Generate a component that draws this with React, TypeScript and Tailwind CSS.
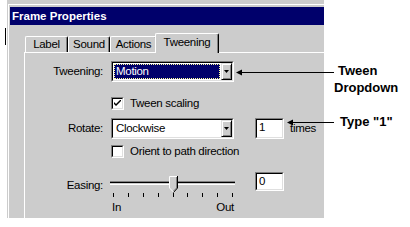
import type { ReactNode } from 'react'

function Sunken({ className = '', children }: { className?: string; children?: ReactNode }) {
    return (
        <div className={`border border-t-[#808080] border-l-[#808080] border-r-white border-b-white ${className}`}>
            <div className="h-full border border-t-black border-l-black border-r-[#dfdfdf] border-b-[#dfdfdf] bg-white">
                {children}
            </div>
        </div>
    )
}

function Dropdown({ value, selected = false }: { value: string; selected?: boolean }) {
    return (
        <Sunken className="h-[21px] w-[123px]">
            <div className="flex h-full">
                <div className="flex-1 p-[1px]">
                    {selected ? (
                        <div className="h-full border border-dotted border-[#ffff99] bg-[#00006b] pl-[1px] leading-[13px] text-white">
                            {value}
                        </div>
                    ) : (
                        <div className="h-full pl-[2px] leading-[15px]">{value}</div>
                    )}
                </div>
                <div className="flex h-full w-[11px] items-center justify-center border border-t-[#dfdfdf] border-l-[#dfdfdf] border-r-black border-b-black bg-[#cccccc] shadow-[inset_1px_1px_0_#fff,inset_-1px_-1px_0_#808080]">
                    <svg width="5" height="3" viewBox="0 0 5 3">
                        <polygon points="0,0 5,0 2.5,3" fill="black" />
                    </svg>
                </div>
            </div>
        </Sunken>
    )
}

function Checkbox({ checked = false, label }: { checked?: boolean; label: string }) {
    return (
        <div className="flex items-center gap-[6px]">
            <Sunken className="h-[13px] w-[13px]">
                {checked && (
                    <svg width="7" height="7" viewBox="0 0 7 7" className="ml-[1px] mt-[1px] block">
                        <path d="M0 2l2 2 5-5v2l-5 5-2-2z" fill="black" />
                    </svg>
                )}
            </Sunken>
            <span>{label}</span>
        </div>
    )
}

function NumberBox({ value, className = '' }: { value: string; className?: string }) {
    return (
        <Sunken className={`w-[29px] ${className}`}>
            <div className="pl-[2px] pt-[1px]">{value}</div>
        </Sunken>
    )
}

function Slider() {
    return (
        <div className="w-[125px]">
            <div className="relative h-[16px] pt-[5px]">
                <div className="h-[4px] bg-[#cccccc] shadow-[inset_0_1px_0_#808080,inset_0_2px_0_#000,inset_0_-1px_0_#fff]" />
                <svg width="9" height="17" viewBox="0 0 9 17" className="absolute left-[59px] top-0">
                    <polygon points="0,0 9,0 9,12 4.5,16.5 0,12" fill="#cccccc" />
                    <polyline points="0.5,12 0.5,0.5 8,0.5" fill="none" stroke="white" />
                    <line x1="0.5" y1="12" x2="4.5" y2="16" stroke="white" />
                    <polyline points="7.5,1 7.5,12 4.5,15" fill="none" stroke="#808080" />
                    <polyline points="8.5,0 8.5,12 4.5,16.5" fill="none" stroke="black" />
                </svg>
            </div>
            <div className="mt-[1px] flex h-[4px] justify-between pl-[3px] pr-[2px]">
                {[0, 1, 2, 3, 4, 5, 6, 7, 8].map((t) => (
                    <div key={t} className="h-full w-[1px] bg-black" />
                ))}
            </div>
            <div className="mt-[4px] flex justify-between pl-[2px] pr-[1px]">
                <span>In</span>
                <span>Out</span>
            </div>
        </div>
    )
}

const tabs = [
    { label: 'Label', width: 'w-[43px]' },
    { label: 'Sound', width: 'w-[42px]' },
    { label: 'Actions', width: 'w-[47px]' },
]

export default function App() {
    return (
        <div className="relative flex h-[227px] w-[410px] overflow-hidden bg-white font-['Liberation_Sans',Arial,sans-serif] text-black">
            {/* left gutter */}
            <div className="w-[7px]">
                <div className="ml-[5px] mt-[28px] h-[17px] w-[1px] bg-black" />
            </div>

            {/* Dialog */}
            <div className="h-[218px] w-[317px] bg-[#cccccc] pl-[1px] pt-[4px]">
                <div className="flex h-full flex-col border-l border-t border-white pl-[1px] pt-[2px]">
                    <div className="h-[18px] bg-[#00006b] pl-[2px] text-[11.5px] font-bold leading-[18px] text-white">
                        Frame Properties
                    </div>

                    <div className="flex flex-1 flex-col text-[11.5px] leading-[13px] tracking-[-0.3px]">
                        {/* Tabs */}
                        <div className="ml-[15px] mt-[8px] flex items-end">
                            {tabs.map((t) => (
                                <div
                                    key={t.label}
                                    className={`${t.width} h-[16px] rounded-t-[2px] border-l border-r border-t border-l-white border-r-black border-t-white pt-[1px] text-center shadow-[inset_-1px_0_0_#808080]`}
                                >
                                    {t.label}
                                </div>
                            ))}
                            <div className="relative z-10 -mb-[1px] -ml-[2px] h-[20px] w-[64px] rounded-t-[2px] border-l border-r border-t border-l-white border-r-black border-t-white bg-[#cccccc] pt-[2px] text-center shadow-[inset_-1px_0_0_#808080]">
                                Tweening
                            </div>
                        </div>

                        {/* Panel */}
                        <div className="ml-[14px] flex-1 border-l border-t border-white">
                            <div className="mt-[8px] flex items-center">
                                <div className="w-[78px] text-right">Tweening:</div>
                                <div className="ml-[8px]">
                                    <Dropdown value="Motion" selected />
                                </div>
                            </div>

                            <div className="ml-[86px] mt-[15px]">
                                <Checkbox checked label="Tween scaling" />
                            </div>

                            <div className="mt-[8px] flex items-center">
                                <div className="w-[78px] text-right">Rotate:</div>
                                <div className="ml-[8px]">
                                    <Dropdown value="Clockwise" />
                                </div>
                                <NumberBox value="1" className="ml-[21px] h-[21px]" />
                                <span className="ml-[6px]">times</span>
                            </div>

                            <div className="ml-[86px] mt-[6px]">
                                <Checkbox label="Orient to path direction" />
                            </div>

                            <div className="mt-[14px] flex items-start">
                                <div className="w-[78px] pt-[7px] text-right">Easing:</div>
                                <div className="ml-[7px] mt-[4px]">
                                    <Slider />
                                </div>
                                <NumberBox value="0" className="ml-[20px] h-[19px]" />
                            </div>
                        </div>
                    </div>
                </div>
            </div>

            {/* Callouts */}
            <div className="flex-1 pt-[62px] text-[13px] font-bold leading-[17px]">
                <div className="pl-[14px]">Tween</div>
                <div className="pl-[10px]">Dropdown</div>
                <div className="mt-[17px] pl-[16px]">Type "1"</div>
            </div>

            <svg className="pointer-events-none absolute left-0 top-0" width="410" height="227">
                <line x1="240" y1="72.5" x2="334" y2="72.5" stroke="black" />
                <polygon points="236,72.5 242,69.5 242,75.5" fill="black" />
                <line x1="291" y1="122.5" x2="334" y2="122.5" stroke="black" />
                <polygon points="287,122.5 293,119.5 293,125.5" fill="black" />
            </svg>
        </div>
    )
}
